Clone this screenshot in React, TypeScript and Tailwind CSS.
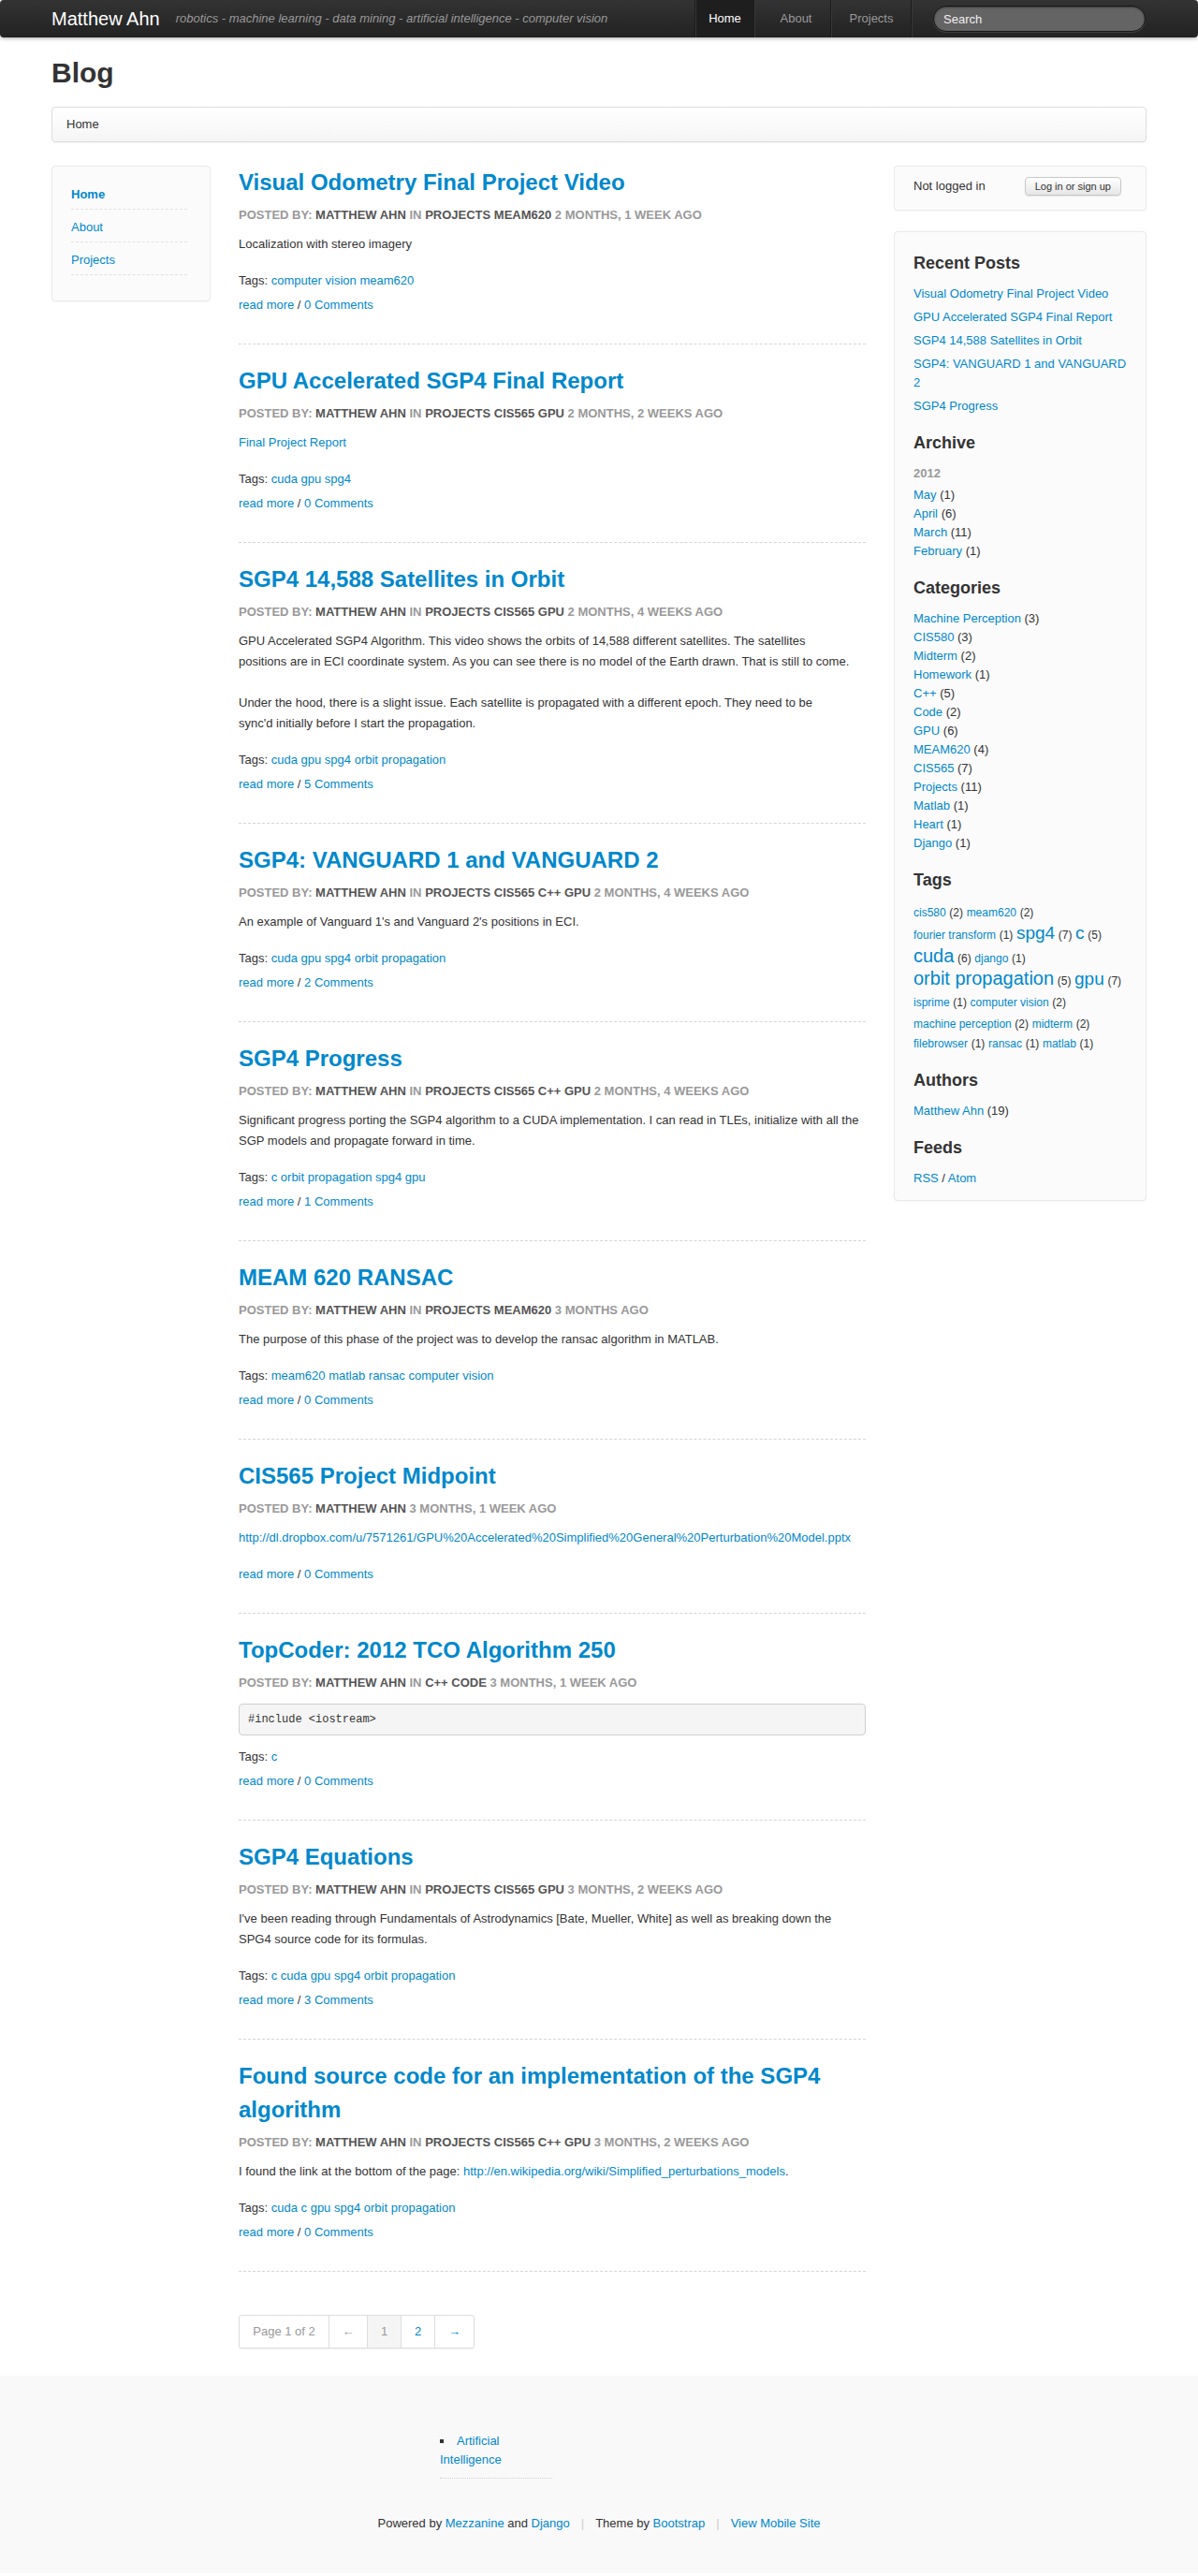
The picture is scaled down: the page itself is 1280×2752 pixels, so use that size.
import type { ReactNode } from "react"

const link = "text-[#0088cc]"

type Post = {
  title: string
  cats: string | null
  ago: string
  body: ReactNode
  code?: boolean
  tags: string[] | null
  comments: number
}

const posts: Post[] = [
  {
    title: "Visual Odometry Final Project Video",
    cats: "Projects MEAM620",
    ago: "2 months, 1 week ago",
    body: <p>Localization with stereo imagery</p>,
    tags: ["computer vision", "meam620"],
    comments: 0,
  },
  {
    title: "GPU Accelerated SGP4 Final Report",
    cats: "Projects CIS565 GPU",
    ago: "2 months, 2 weeks ago",
    body: (
      <p>
        <a className={link}>Final Project Report</a>
      </p>
    ),
    tags: ["cuda", "gpu", "spg4"],
    comments: 0,
  },
  {
    title: "SGP4 14,588 Satellites in Orbit",
    cats: "Projects CIS565 GPU",
    ago: "2 months, 4 weeks ago",
    body: (
      <>
        <p className="mb-[22px]">
          <span className="block whitespace-nowrap">
            GPU Accelerated SGP4 Algorithm. This video shows the orbits of 14,588 different satellites. The satellites
          </span>
          <span className="block whitespace-nowrap">
            positions are in ECI coordinate system. As you can see there is no model of the Earth drawn. That is still to come.
          </span>
        </p>
        <p>
          <span className="block whitespace-nowrap">
            Under the hood, there is a slight issue. Each satellite is propagated with a different epoch. They need to be
          </span>
          <span className="block whitespace-nowrap">sync'd initially before I start the propagation.</span>
        </p>
      </>
    ),
    tags: ["cuda", "gpu", "spg4", "orbit propagation"],
    comments: 5,
  },
  {
    title: "SGP4: VANGUARD 1 and VANGUARD 2",
    cats: "Projects CIS565 C++ GPU",
    ago: "2 months, 4 weeks ago",
    body: <p>An example of Vanguard 1's and Vanguard 2's positions in ECI.</p>,
    tags: ["cuda", "gpu", "spg4", "orbit propagation"],
    comments: 2,
  },
  {
    title: "SGP4 Progress",
    cats: "Projects CIS565 C++ GPU",
    ago: "2 months, 4 weeks ago",
    body: (
      <p>
        <span className="block whitespace-nowrap">
          Significant progress porting the SGP4 algorithm to a CUDA implementation. I can read in TLEs, initialize with all the
        </span>
        <span className="block whitespace-nowrap">SGP models and propagate forward in time.</span>
      </p>
    ),
    tags: ["c", "orbit propagation", "spg4", "gpu"],
    comments: 1,
  },
  {
    title: "MEAM 620 RANSAC",
    cats: "Projects MEAM620",
    ago: "3 months ago",
    body: <p>The purpose of this phase of the project was to develop the ransac algorithm in MATLAB.</p>,
    tags: ["meam620", "matlab", "ransac", "computer vision"],
    comments: 0,
  },
  {
    title: "CIS565 Project Midpoint",
    cats: null,
    ago: "3 months, 1 week ago",
    body: (
      <p className="whitespace-nowrap">
        <a className={link}>
          http://dl.dropbox.com/u/7571261/GPU%20Accelerated%20Simplified%20General%20Perturbation%20Model.pptx
        </a>
      </p>
    ),
    tags: null,
    comments: 0,
  },
  {
    title: "TopCoder: 2012 TCO Algorithm 250",
    cats: "C++ Code",
    ago: "3 months, 1 week ago",
    body: "#include <iostream>",
    code: true,
    tags: ["c"],
    comments: 0,
  },
  {
    title: "SGP4 Equations",
    cats: "Projects CIS565 GPU",
    ago: "3 months, 2 weeks ago",
    body: (
      <p>
        <span className="block whitespace-nowrap">
          I've been reading through Fundamentals of Astrodynamics [Bate, Mueller, White] as well as breaking down the
        </span>
        <span className="block whitespace-nowrap">SPG4 source code for its formulas.</span>
      </p>
    ),
    tags: ["c", "cuda", "gpu", "spg4", "orbit propagation"],
    comments: 3,
  },
  {
    title: "Found source code for an implementation of the SGP4 algorithm",
    cats: "Projects CIS565 C++ GPU",
    ago: "3 months, 2 weeks ago",
    body: (
      <p>
        I found the link at the bottom of the page:{" "}
        <a className={link}>http://en.wikipedia.org/wiki/Simplified_perturbations_models</a>.
      </p>
    ),
    tags: ["cuda", "c", "gpu", "spg4", "orbit propagation"],
    comments: 0,
  },
]

function PostItem({ post, first }: { post: Post; first: boolean }) {
  return (
    <article
      className={`${first ? "" : "pt-[21px]"} pb-[30px] border-b border-dashed border-[#d5d5d5]`}
    >
      <h2 className="text-[24px] font-bold leading-[36px] text-[#0088cc]">{post.title}</h2>
      <h6 className="mt-[8px] text-[13px] font-bold uppercase leading-[18px] text-[#999]">
        Posted by: <span className="text-[#555]">Matthew Ahn</span>
        {post.cats && (
          <>
            {" "}
            in <span className="text-[#555]">{post.cats}</span>
          </>
        )}{" "}
        {post.ago}
      </h6>
      {post.code ? (
        <pre className="mt-[13px] mb-[12px] rounded-[4px] border border-[#d0d0d0] bg-[#f5f5f5] py-[8px] pl-[9px] font-['Liberation_Mono',monospace] text-[12px] leading-[16px] text-[#333]">
          {post.body}
        </pre>
      ) : (
        <div className="mt-[11px] mb-[17px] leading-[22px]">{post.body}</div>
      )}
      {post.tags && (
        <p className="leading-[22px]">
          Tags:{" "}
          {post.tags.map((t, i) => (
            <span key={t}>
              {i > 0 && " "}
              <a className={link}>{t}</a>
            </span>
          ))}
        </p>
      )}
      <p className={`${post.tags ? "mt-[4px]" : ""} leading-[22px]`}>
        <a className={link}>read more</a> / <a className={link}>{post.comments} Comments</a>
      </p>
    </article>
  )
}

function Divider() {
  return <div className="h-10 w-[2px] border-l border-r border-l-[#1a1a1a] border-r-[#383838]" />
}

function Navbar() {
  return (
    <header className="h-10 rounded-[4px] bg-gradient-to-b from-[#333] to-[#222] shadow-[0_1px_4px_rgba(0,0,0,0.35)]">
      <div className="mx-auto flex h-10 w-[1170px] items-center">
        <span className="text-[20px] leading-10 text-white">Matthew Ahn</span>
        <span className="ml-[17px] text-[13px] italic text-[#999]">
          robotics - machine learning - data mining - artificial intelligence - computer vision
        </span>
        <nav className="ml-auto flex h-10 text-[13px] leading-10">
          <Divider />
          <a className="w-[61px] bg-[#1e1e1e] text-center text-white">Home</a>
          <Divider />
          <div className="w-[7px]" />
          <a className="w-[73px] text-center text-[#999]">About</a>
          <Divider />
          <a className="w-[84px] text-center text-[#999]">Projects</a>
          <Divider />
        </nav>
        <input
          readOnly
          placeholder="Search"
          className="ml-[22px] mr-[1px] h-[28px] w-[227px] rounded-full border border-[#151515] bg-[#646464] px-[10px] text-[13px] text-white shadow-[inset_0_1px_2px_rgba(0,0,0,0.45),0_1px_0_rgba(255,255,255,0.12)] outline-none placeholder:text-[#f0f0f0]"
        />
      </div>
    </header>
  )
}

function WidgetTitle({ children, first }: { children: ReactNode; first?: boolean }) {
  return (
    <h3 className={`${first ? "" : "mt-[16px]"} mb-[9px] text-[18px] font-bold leading-[27px] text-[#333]`}>
      {children}
    </h3>
  )
}

const categories: [string, number][] = [
  ["Machine Perception", 3],
  ["CIS580", 3],
  ["Midterm", 2],
  ["Homework", 1],
  ["C++", 5],
  ["Code", 2],
  ["GPU", 6],
  ["MEAM620", 4],
  ["CIS565", 7],
  ["Projects", 11],
  ["Matlab", 1],
  ["Heart", 1],
  ["Django", 1],
]

type Tag = [string, number, string]

// rows of the tag cloud, each with a fixed height so the big words don't push the lines apart
const tagRows: { h: string; tags: Tag[] }[] = [
  { h: "h-[24px] leading-[24px]", tags: [["cis580", 2, "text-[12px]"], ["meam620", 2, "text-[12px]"]] },
  {
    h: "h-[24px] leading-[24px]",
    tags: [["fourier transform", 1, "text-[12px]"], ["spg4", 7, "text-[19px]"], ["c", 5, "text-[19px]"]],
  },
  { h: "h-[24px] leading-[24px]", tags: [["cuda", 6, "text-[20px]"], ["django", 1, "text-[12px]"]] },
  {
    h: "h-[24px] leading-[24px]",
    tags: [["orbit propagation", 5, "text-[20px]"], ["gpu", 7, "text-[19px]"]],
  },
  {
    h: "h-[24px] leading-[24px]",
    tags: [["isprime", 1, "text-[12px]"], ["computer vision", 2, "text-[12px]"]],
  },
  {
    h: "h-[22px] leading-[22px]",
    tags: [["machine perception", 2, "text-[12px]"], ["midterm", 2, "text-[12px]"]],
  },
  {
    h: "h-[20px] leading-[20px]",
    tags: [["filebrowser", 1, "text-[12px]"], ["ransac", 1, "text-[12px]"], ["matlab", 1, "text-[12px]"]],
  },
]

const box = "rounded-[4px] border border-[#eaeaea] bg-[#fbfbfb] shadow-[0_1px_2px_rgba(0,0,0,0.04)]"

function RightSidebar() {
  return (
    <aside className="w-[270px]">
      <div className={`${box} flex items-center justify-between pt-[11px] pb-[15px] pl-[20px] pr-[26px]`}>
        <span className="leading-[20px]">Not logged in</span>
        <button className="h-[20px] rounded-[4px] border border-[#c8c8c8] bg-gradient-to-b from-white to-[#e6e6e6] px-[10px] text-[11px] leading-[18px] text-[#333] shadow-[0_1px_1px_rgba(0,0,0,0.08)]">
          Log in or sign up
        </button>
      </div>

      <div className={`${box} mt-[22px] px-[20px] pt-[20px] pb-[13px]`}>
        <WidgetTitle first>Recent Posts</WidgetTitle>
        <ul className="leading-[20px]">
          <li className="mb-[5px]">
            <a className={link}>Visual Odometry Final Project Video</a>
          </li>
          <li className="mb-[5px]">
            <a className={link}>GPU Accelerated SGP4 Final Report</a>
          </li>
          <li className="mb-[5px]">
            <a className={link}>SGP4 14,588 Satellites in Orbit</a>
          </li>
          <li className="mb-[5px]">
            <a className={link}>
              <span className="block whitespace-nowrap">SGP4: VANGUARD 1 and VANGUARD</span>
              <span className="block">2</span>
            </a>
          </li>
          <li>
            <a className={link}>SGP4 Progress</a>
          </li>
        </ul>

        <WidgetTitle>Archive</WidgetTitle>
        <p className="mb-[3px] font-bold leading-[20px] text-[#999]">2012</p>
        <ul className="leading-[20px]">
          {[
            ["May", 1],
            ["April", 6],
            ["March", 11],
            ["February", 1],
          ].map(([m, n]) => (
            <li key={m}>
              <a className={link}>{m}</a> ({n})
            </li>
          ))}
        </ul>

        <WidgetTitle>Categories</WidgetTitle>
        <ul className="leading-[20px]">
          {categories.map(([c, n]) => (
            <li key={c}>
              <a className={link}>{c}</a> ({n})
            </li>
          ))}
        </ul>

        <WidgetTitle>Tags</WidgetTitle>
        <div className="mb-[1px]">
          {tagRows.map((row, i) => (
            <div key={i} className={`${row.h} whitespace-nowrap`}>
              {row.tags.map(([t, n, size], j) => (
                <span key={t}>
                  {j > 0 && " "}
                  <a className={`${link} ${size} leading-none`}>{t}</a>{" "}
                  <span className="text-[12px] leading-none">({n})</span>
                </span>
              ))}
            </div>
          ))}
        </div>

        <WidgetTitle>Authors</WidgetTitle>
        <p className="leading-[20px]">
          <a className={link}>Matthew Ahn</a> (19)
        </p>

        <WidgetTitle>Feeds</WidgetTitle>
        <p className="leading-[20px]">
          <a className={link}>RSS</a> / <a className={link}>Atom</a>
        </p>
      </div>
    </aside>
  )
}

function LeftSidebar() {
  const items = ["Home", "About", "Projects"]
  return (
    <aside className="w-[170px]">
      <div className={`${box} pt-[11px] pb-[27px] pl-[20px] pr-[24px]`}>
        <ul>
          {items.map((it, i) => (
            <li
              key={it}
              className="border-b border-dashed border-[#e2e2e2] pt-[10px] pb-[6px] leading-[18px]"
            >
              <a className={`${link} ${i === 0 ? "font-bold" : ""}`}>{it}</a>
            </li>
          ))}
        </ul>
      </div>
    </aside>
  )
}

function Pagination() {
  const cell = "h-[34px] leading-[34px] text-center border-l border-[#ddd]"
  return (
    <div className="mt-[46px] mb-[29px] flex w-max rounded-[3px] border border-[#ddd] shadow-[0_1px_2px_rgba(0,0,0,0.05)]">
      <span className="h-[34px] w-[95px] text-center leading-[34px] text-[#999]">Page 1 of 2</span>
      <span className={`${cell} w-[41px] text-[#999]`}>←</span>
      <span className={`${cell} w-[36px] bg-[#f5f5f5] text-[#999]`}>1</span>
      <a className={`${cell} w-[36px] ${link}`}>2</a>
      <a className={`${cell} w-[42px] ${link}`}>→</a>
    </div>
  )
}

function Footer() {
  return (
    <footer className="bg-[#f9f9f9] pt-[60px] pb-[43px]">
      <div className="mx-auto w-[1170px]">
        <ul className="ml-[415px] w-[120px] leading-[20px]">
          <li className="list-inside list-[square] border-b border-dotted border-[#cfcfcf] pb-[9px] text-[#333]">
            <a className={link}>Artificial Intelligence</a>
          </li>
        </ul>
        <p className="mt-[38px] text-center leading-[20px]">
          Powered by <a className={link}>Mezzanine</a> and <a className={link}>Django</a>
          <span className="px-[12px] text-[#ccc]">|</span>
          Theme by <a className={link}>Bootstrap</a>
          <span className="px-[12px] text-[#ccc]">|</span>
          <a className={link}>View Mobile Site</a>
        </p>
      </div>
    </footer>
  )
}

export default function App() {
  return (
    <div className="min-h-[2752px] bg-white font-['Liberation_Sans',Arial,sans-serif] text-[13px] text-[#333]">
      <Navbar />
      <div className="mx-auto w-[1170px]">
        <h1 className="mt-[20px] text-[30px] font-bold leading-[36px] text-[#333]">Blog</h1>
        <div className="mt-[18px] h-[38px] rounded-[4px] border border-[#ddd] bg-gradient-to-b from-white to-[#f5f5f5] pl-[15px] leading-[36px] shadow-[inset_0_1px_0_#fff,0_1px_1px_rgba(0,0,0,0.04)]">
          Home
        </div>
        <div className="mt-[25px] flex items-start gap-[30px]">
          <LeftSidebar />
          <main className="w-[670px]">
            {posts.map((p, i) => (
              <PostItem key={p.title} post={p} first={i === 0} />
            ))}
            <Pagination />
          </main>
          <RightSidebar />
        </div>
      </div>
      <Footer />
    </div>
  )
}
